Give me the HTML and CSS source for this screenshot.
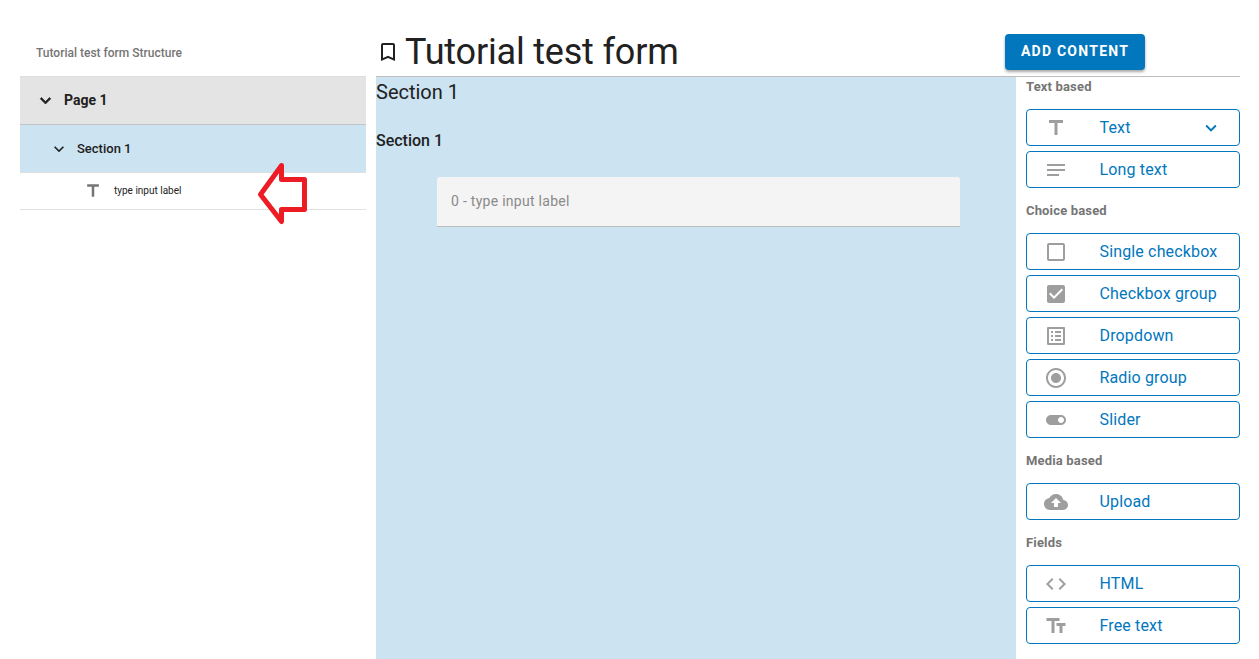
FILE: index.html
```html
<!DOCTYPE html>
<html lang="en">
<head>
<meta charset="utf-8">
<title>Tutorial test form</title>
<link rel="stylesheet" href="styles.css">
</head>
<body>
<div class="app">
  <aside class="structure">
    <div class="structure-title"><span>Tutorial test form Structure</span></div>
    <div class="row row-page">
      <svg class="chevron chevron-page" viewBox="0 0 24 24"><path d="M7.41 8.59 12 13.17l4.59-4.58L18 10l-6 6-6-6z"/></svg>
      <span>Page 1</span>
    </div>
    <div class="row row-section">
      <svg class="chevron" viewBox="0 0 24 24"><path d="M7.41 8.59 12 13.17l4.59-4.58L18 10l-6 6-6-6z"/></svg>
      <span>Section 1</span>
    </div>
    <div class="row row-input">
      <svg class="type-icon" viewBox="0 0 24 24"><path d="M5 4v3h5.5v12h3V7H19V4z"/></svg>
      <span>type input label</span>
      <svg class="pointer" viewBox="0 0 50 64"><path d="M24.500 3.500 3.500 32.500 24.500 59.500V47.500H47.500V17.500H24.500Z"/></svg>
    </div>
  </aside>
  <main class="editor">
    <header class="header">
      <svg class="bookmark" viewBox="0 0 24 24"><path d="M17 3H7c-1.100 0-2 .9-2 2v16l7-3 7 3V5c0-1.100-.9-2-2-2zm0 15-5-2.180L7 18V5h10z"/></svg>
      <h1>Tutorial test form</h1>
      <button class="add">ADD CONTENT</button>
    </header>
    <div class="body">
      <section class="canvas">
        <h2>Section 1</h2>
        <h3>Section 1</h3>
        <div class="field"><span>0 - type input label</span></div>
      </section>
      <nav class="palette">
        <div class="group">
          <h4>Text based</h4>
          <button class="item"><svg viewBox="0 0 24 24"><path d="M5 4v3h5.500v12h3V7H19V4z"/></svg><span>Text</span><svg class="expand" viewBox="0 0 24 24"><path d="M7.410 8.590 12 13.170l4.590-4.580L18 10l-6 6-6-6z"/></svg></button>
          <button class="item"><svg viewBox="0 0 24 24"><path d="M3 18h12v-2H3zM3 6v2h18V6zm0 7h18v-2H3z"/></svg><span>Long text</span></button>
        </div>
        <div class="group">
          <h4>Choice based</h4>
          <button class="item"><svg viewBox="0 0 24 24"><path d="M19 5v14H5V5h14m0-2H5c-1.100 0-2 .9-2 2v14c0 1.100.9 2 2 2h14c1.100 0 2-.9 2-2V5c0-1.100-.9-2-2-2z"/></svg><span>Single checkbox</span></button>
          <button class="item"><svg viewBox="0 0 24 24"><path d="M19 3H5c-1.110 0-2 .9-2 2v14c0 1.100.890 2 2 2h14c1.110 0 2-.9 2-2V5c0-1.100-.890-2-2-2zm-9 14-5-5 1.410-1.410L10 14.170l7.590-7.590L19 8z"/></svg><span>Checkbox group</span></button>
          <button class="item"><svg viewBox="0 0 24 24"><path d="M19 5v14H5V5h14m1.100-2H3.900c-.5 0-.9.4-.9.9v16.200c0 .4.4.9.9.9h16.200c.4 0 .9-.5.9-.9V3.900c0-.5-.5-.9-.9-.9zM11 7h6v2h-6V7zm0 4h6v2h-6v-2zm0 4h6v2h-6zM7 7h2v2H7zm0 4h2v2H7zm0 4h2v2H7z"/></svg><span>Dropdown</span></button>
          <button class="item"><svg viewBox="0 0 24 24"><path d="M12 7c-2.760 0-5 2.240-5 5s2.240 5 5 5 5-2.240 5-5-2.240-5-5-5zm0-5C6.480 2 2 6.480 2 12s4.480 10 10 10 10-4.480 10-10S17.520 2 12 2zm0 18c-4.420 0-8-3.580-8-8s3.580-8 8-8 8 3.580 8 8-3.580 8-8 8z"/></svg><span>Radio group</span></button>
          <button class="item"><svg viewBox="0 0 24 24"><path d="M17 7H7c-2.760 0-5 2.240-5 5s2.240 5 5 5h10c2.760 0 5-2.240 5-5s-2.240-5-5-5zm0 8c-1.660 0-3-1.340-3-3s1.340-3 3-3 3 1.340 3 3-1.340 3-3 3z"/></svg><span>Slider</span></button>
        </div>
        <div class="group">
          <h4>Media based</h4>
          <button class="item"><svg viewBox="0 0 24 24"><path d="M19.350 10.040C18.670 6.590 15.640 4 12 4 9.110 4 6.600 5.640 5.350 8.040 2.340 8.360 0 10.910 0 14c0 3.310 2.690 6 6 6h13c2.760 0 5-2.240 5-5 0-2.640-2.050-4.780-4.650-4.960zM14 13v4h-4v-4H7l5-5 5 5h-3z"/></svg><span>Upload</span></button>
        </div>
        <div class="group">
          <h4>Fields</h4>
          <button class="item"><svg viewBox="0 0 24 24"><path d="M9.400 16.600 4.800 12l4.600-4.600L8 6l-6 6 6 6zm5.200 0 4.600-4.600-4.600-4.600L16 6l6 6-6 6z"/></svg><span>HTML</span></button>
          <button class="item"><svg viewBox="0 0 24 24"><path d="M2.500 4v3h5v12h3V7h5V4zm19 5h-9v3h3v7h3v-7h3z"/></svg><span>Free text</span></button>
        </div>
      </nav>
    </div>
  </main>
</div>
</body>
</html>
```

FILE: styles.css
```css
* { box-sizing: border-box; }
body { margin: 0; background: #fff; color: #212121; font-family: Roboto, "Liberation Sans", sans-serif; }
svg { display: block; flex: none; fill: currentColor; }
h1, h2, h3, h4 { margin: 0; }
button { font-family: inherit; cursor: pointer; }
.app { display: flex; gap: 10px; height: 659px; padding: 0 19px 0 20px; overflow: hidden; }

.structure { width: 346px; flex: none; }
.structure-title { height: 76px; padding: 43px 16px 0; font-size: 12px; font-weight: 500; line-height: 20px; color: #757575; }
.row { display: flex; align-items: center; border-bottom: 1px solid #e0e0e0; }
.row-page { height: 49px; padding-left: 15px; gap: 8px; background: #e4e4e4; border-top: 1px solid #dedede; border-bottom-color: #c4c4c4; font-size: 14px; font-weight: 700; }
.row-page span { padding-bottom: 1px; }
.row-section { height: 48px; padding-left: 29px; gap: 8px; background: #cce3f1; font-size: 13px; font-weight: 500; }
.row-input { position: relative; height: 37px; padding-left: 63px; gap: 11px; font-size: 10px; color: #212121; }
.row-input span { padding-bottom: 1px; }
.chevron { width: 20px; height: 20px; }
.chevron-page { width: 21px; height: 21px; stroke: currentColor; stroke-width: 0.8; }
.type-icon { width: 20px; height: 20px; color: #757575; }
.pointer { position: absolute; left: 237px; top: -11px; width: 50px; height: 64px; fill: #fff; stroke: #ed1c24; stroke-width: 5; stroke-linejoin: round; }

.editor { flex: 1; display: flex; flex-direction: column; }
.header { display: flex; align-items: center; height: 77px; padding: 27px 95px 0 0; border-bottom: 1px solid #bdbdbd; }
.bookmark { width: 24px; height: 24px; }
.header h1 { margin-left: 5px; font-size: 36px; font-weight: 400; line-height: 48px; letter-spacing: -0.18px; }
.add { width: 140px; height: 36px; margin-left: auto; padding: 0 0 2px; border: 0; border-radius: 4px; background: #0277bd; color: #fff; font-size: 14px; font-weight: 700; letter-spacing: 1.25px; box-shadow: 0 2px 3px rgba(0, 0, 0, 0.35); }
.body { flex: 1; display: flex; }
.canvas { width: 640px; background: #cce3f1; }
.canvas h2 { font-size: 20px; font-weight: 400; line-height: 30px; }
.canvas h3 { margin-top: 22px; font-size: 16px; font-weight: 500; line-height: 24px; }
.field { display: flex; align-items: center; width: 523px; height: 50px; margin: 24px 0 0 61px; padding: 0 14px 1px; border-bottom: 1px solid #bdbdbd; border-radius: 3px 3px 0 0; background: #f4f4f4; color: #8a8a8a; font-size: 14px; letter-spacing: 0.28px; }

.palette { flex: 1; display: flex; flex-direction: column; gap: 13px; padding-left: 10px; }
.group { display: flex; flex-direction: column; gap: 5px; }
.group h4 { height: 27px; color: #757575; font-size: 13px; font-weight: 700; line-height: 19px; letter-spacing: 0.16px; }
.item { display: flex; align-items: center; width: 214px; height: 37px; padding: 0 17px 0 16.5px; border: 1px solid #0277bd; border-radius: 4px; background: #fff; color: #0277bd; font-size: 16px; text-align: left; letter-spacing: 0.15px; }
.item svg { width: 24px; height: 24px; color: #9e9e9e; }
.item span { margin-left: 32px; }
.item .expand { width: 22px; height: 22px; margin-left: auto; color: #0277bd; }
```
